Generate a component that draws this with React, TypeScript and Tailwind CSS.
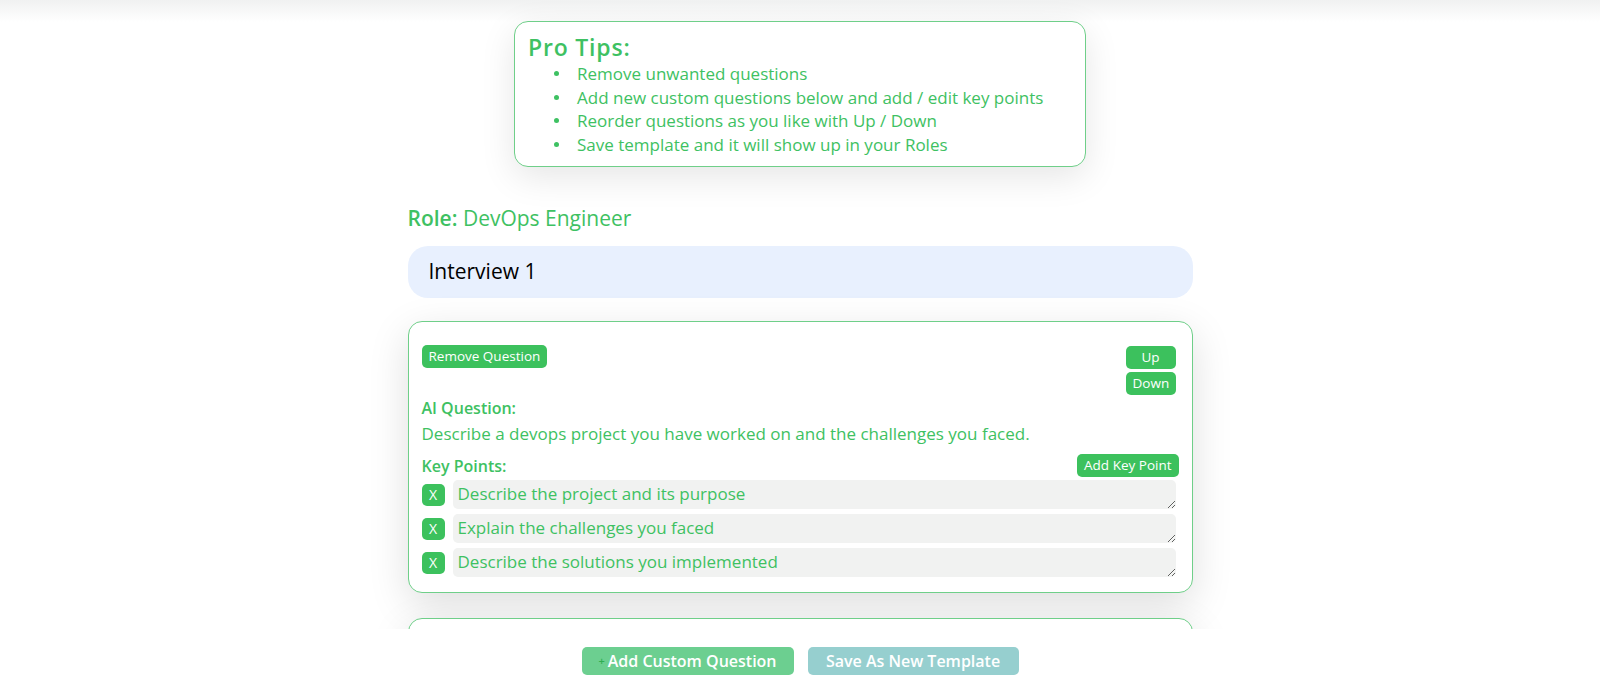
import React from 'react';

const tips = [
  'Remove unwanted questions',
  'Add new custom questions below and add / edit key points',
  'Reorder questions as you like with Up / Down',
  'Save template and it will show up in your Roles',
];

const keyPoints = [
  'Describe the project and its purpose',
  'Explain the challenges you faced',
  'Describe the solutions you implemented',
];

const font = { fontFamily: '"Open Sans", "Liberation Sans", sans-serif' };

const SmallButton: React.FC<{ label: string; className?: string }> = ({ label, className = '' }) => (
  <button
    className={`h-[23px] rounded-[5px] bg-[#3cc15d] px-[7px] text-[13.5px] leading-[23px] text-white ${className}`}
  >
    {label}
  </button>
);

const QuestionCard: React.FC = () => (
  <div className="mt-[23px] rounded-[14px] border border-[#6fcf89] bg-white px-[13px] pt-[23px] pb-[15px] shadow-[0_12px_40px_rgba(0,0,0,0.13)]">
    <div className="flex items-start justify-between">
      <SmallButton label="Remove Question" />
      <div className="mr-[3px] flex w-[50px] flex-col gap-[3px] pt-[1px]">
        <SmallButton label="Up" className="w-full" />
        <SmallButton label="Down" className="w-full" />
      </div>
    </div>
    <div className="mt-[3px] text-[16px] font-semibold leading-[20px] text-[#3ec162]">AI Question:</div>
    <div className="mt-[5px] text-[17px] leading-[22px] text-[#3ec162]">
      Describe a devops project you have worked on and the challenges you faced.
    </div>
    <div className="mt-[9px] flex items-center justify-between">
      <div className="text-[16px] font-semibold leading-[20px] text-[#3ec162]">Key Points:</div>
      <SmallButton label="Add Key Point" />
    </div>
    <div className="mt-[3px] flex flex-col gap-[5px]">
      {keyPoints.map((kp) => (
        <div key={kp} className="flex items-center gap-[8px]">
          <button className="h-[22px] w-[23px] shrink-0 rounded-[5px] bg-[#3cc15d] text-[14px] text-white">X</button>
          <textarea
            defaultValue={kp}
            rows={1}
            className="mr-[3px] h-[29px] flex-1 overflow-hidden rounded-[5px] bg-[#f1f2f1] px-[5px] pt-[3px] text-[17px] leading-[22px] text-[#3ec162] outline-none"
            style={font}
          />
        </div>
      ))}
    </div>
  </div>
);

export default function App() {
  return (
    <div className="flex h-[684px] w-full flex-col bg-white" style={font}>
      <div className="relative flex-1 overflow-hidden">
        <div className="pointer-events-none absolute inset-x-0 top-0 h-[22px] bg-gradient-to-b from-[#f0f1f1] to-white/0" />
        <div className="relative mx-auto mt-[21px] w-[572px] rounded-[14px] border border-[#6fcf89] bg-white px-[13px] pt-[11px] pb-[10px] shadow-[0_10px_35px_rgba(0,0,0,0.1)]">
          <div className="text-[23px] font-semibold leading-[28px] tracking-[0.8px] text-[#3ec162]">Pro Tips:</div>
          <ul className="mt-[1px] pl-[26px] text-[17px] leading-[23.5px] text-[#3ec162]">
            {tips.map((t) => (
              <li key={t} className="flex items-center">
                <span className="mr-[18px] h-[5px] w-[5px] shrink-0 rounded-full bg-[#3ec162]" />
                {t}
              </li>
            ))}
          </ul>
        </div>
        <div className="mx-auto w-[785px]">
          <div className="mt-[37px] text-[21px] leading-[28px] text-[#3ec162]">
            <span className="font-semibold">Role:</span> DevOps Engineer
          </div>
          <div className="mt-[14px] flex h-[52px] items-center rounded-[20px] bg-[#e8f0fe] px-[21px] text-[21px] text-black">
            Interview 1
          </div>
          <QuestionCard />
          <div className="mt-[25px] h-[120px] rounded-[14px] border border-[#6fcf89] bg-white shadow-[0_12px_40px_rgba(0,0,0,0.13)]" />
        </div>
      </div>
      <div className="flex h-[55px] shrink-0 items-start justify-center gap-[14px] bg-white pt-[18px]">
        <button className="flex h-[28px] w-[212px] items-center justify-center rounded-[5px] bg-[#6ccf90] text-[16px] font-semibold text-white">
          <span className="mr-[3px] text-[11px] text-[#2fae52]">+</span>Add Custom Question
        </button>
        <button className="flex h-[28px] w-[211px] items-center justify-center rounded-[5px] bg-[#96cfcf] text-[16px] font-semibold text-white">
          Save As New Template
        </button>
      </div>
    </div>
  );
}
